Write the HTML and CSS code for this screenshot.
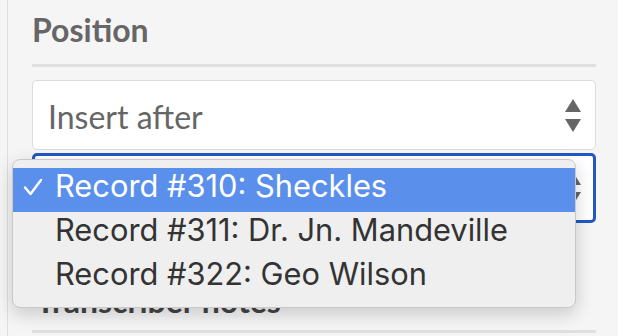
FILE: index.html
```html
<!DOCTYPE html>
<html lang="en">
<head>
    <meta charset="UTF-8">
    <meta name="viewport" content="width=device-width, initial-scale=1.0">
    <title>Position</title>
    <link rel="stylesheet" href="styles.css">
</head>
<body>
    <div class="sidebar">
        <section class="field">
            <h3 class="field-title">Position</h3>
            <div class="select-box">
                <span class="select-value">Insert after</span>
                <svg class="select-arrows" width="16" height="34" viewBox="0 0 16 34">
                    <path d="M8 0 L16 13 L0 13 Z" fill="#666"/>
                    <path d="M0 20 L16 20 L8 33 Z" fill="#666"/>
                </svg>
            </div>
            <div class="select-box active">
                <span class="select-value">Record #310: Sheckles</span>
                <svg class="select-arrows" width="16" height="34" viewBox="0 0 16 34">
                    <path d="M8 0 L16 13 L0 13 Z" fill="#666"/>
                    <path d="M0 20 L16 20 L8 33 Z" fill="#666"/>
                </svg>
            </div>
            <ul class="popup-menu">
                <li class="selected">
                    <svg class="check" width="20" height="18" viewBox="0 0 20 18">
                        <path d="M2 9.5 L7.5 16 L18 2" fill="none" stroke="#fff" stroke-width="2.4" stroke-linecap="round" stroke-linejoin="round"/>
                    </svg>
                    Record #310: Sheckles
                </li>
                <li>Record #311: Dr. Jn. Mandeville</li>
                <li>Record #322: Geo Wilson</li>
            </ul>
        </section>
        <section class="field">
            <h3 class="field-title notes">Transcriber notes</h3>
        </section>
    </div>
</body>
</html>
```

FILE: styles.css
```css
body {
    margin: 0;
    padding: 0 0 0 7px;
    background-color: #f5f5f5;
    font-family: Lato, "Liberation Sans", sans-serif;
    overflow: hidden;
}

.sidebar {
    border-left: 1px solid #dedede;
    padding: 0 22px 0 24px;
    height: 336px;
    position: relative;
}

.field-title {
    margin: 0;
    padding: 12px 0 16px;
    font-size: 32px;
    font-weight: 700;
    line-height: 36px;
    color: #666;
    border-bottom: 3px solid #dfdfdf;
}

.field-title.notes {
    padding: 60px 0 11px 4px;
    color: #444;
}

.select-box {
    display: flex;
    align-items: center;
    justify-content: space-between;
    margin-top: 13px;
    padding: 2px 14px 0 15px;
    height: 66px;
    background-color: #fff;
    border: 1px solid #dcdcdc;
    border-radius: 5px;
}

.select-box.active {
    margin-top: 3px;
    height: 62px;
    border: 3px solid #2158c4;
    padding-left: 13px;
    padding-right: 12px;
}

.select-value {
    font-size: 32px;
    color: #666;
}

.select-arrows {
    flex-shrink: 0;
}

.popup-menu {
    position: absolute;
    left: 4px;
    top: 159px;
    width: 562px;
    margin: 0;
    padding: 8px 0 7px;
    list-style: none;
    background-color: #efefef;
    border: 1px solid #c9c9c9;
    border-radius: 8px;
    box-shadow: 0 6px 18px rgba(0, 0, 0, 0.18);
    font-family: Inter, "Liberation Sans", sans-serif;
    font-size: 30.8px;
    color: #333;
}

.popup-menu li {
    position: relative;
    height: 44px;
    line-height: 36px;
    padding-left: 42px;
    white-space: nowrap;
}

.popup-menu li.selected {
    background-color: #5a90ec;
    color: #fff;
}

.check {
    position: absolute;
    left: 10px;
    top: 10px;
}
```
